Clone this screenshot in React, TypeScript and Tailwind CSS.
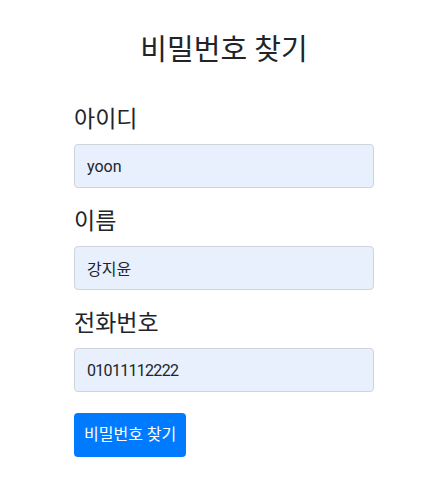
import React from "react";

const font = { fontFamily: 'Roboto, "Noto Sans CJK KR", sans-serif' };

function Field({ label, value, tight }: { label: string; value: string; tight?: boolean }) {
  return (
    <div className="flex flex-col">
      <label className="pt-[3px] text-[23px] leading-[26px] text-[#212529] mb-[11px]">{label}</label>
      <input
        readOnly
        value={value}
        className={
          "h-[44px] w-full rounded-[4px] border border-[#ced4da] bg-[#e8f0fe] px-3 text-[16px] text-[#212529] outline-none " +
          (tight ? "tracking-[-0.7px]" : "")
        }
      />
    </div>
  );
}

export default function App() {
  return (
    <div className="min-h-[502px] bg-white" style={font}>
      <div className="ml-[74px] w-[300px] pt-[32px]">
        <h1 className="text-center text-[29px] leading-[36px] font-normal text-[#212529] mb-[36px]">비밀번호 찾기</h1>
        <div className="flex flex-col gap-[18px]">
          <Field label="아이디" value="yoon" />
          <Field label="이름" value="강지윤" />
          <Field label="전화번호" value="01011112222" tight />
        </div>
        <button className="mt-[21px] h-[44px] rounded-[4px] bg-[#007bff] px-[10px] text-[16px] text-white">비밀번호 찾기</button>
      </div>
    </div>
  );
}
